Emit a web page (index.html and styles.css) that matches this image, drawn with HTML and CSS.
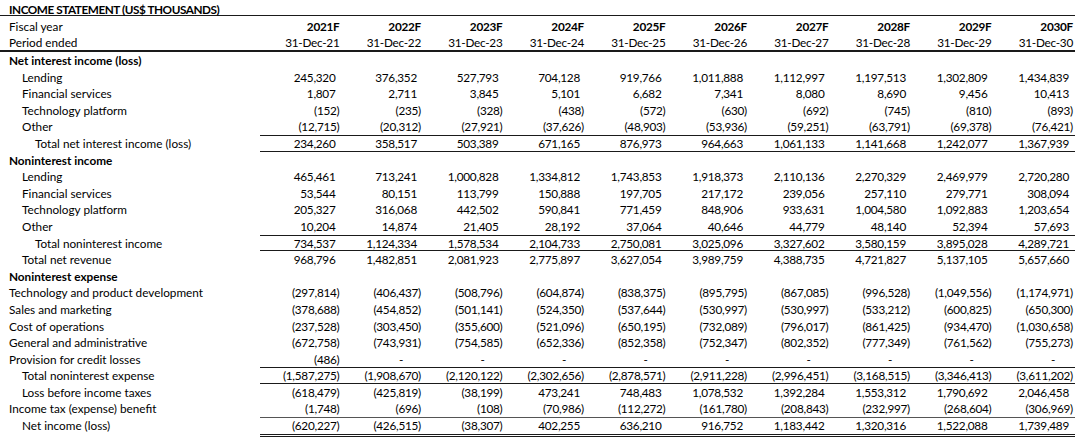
FILE: index.html
```html
<!DOCTYPE html>
<html>
<head>
<meta charset="utf-8">
<link rel="stylesheet" href="styles.css">
</head>
<body>
<div class="sheet">
<div class="row title-row"><div class="lab title">INCOME STATEMENT (US$ THOUSANDS)</div></div>
<div class="row hdr"><div class="lab">Fiscal year</div><div class="n b">2021F</div><div class="n b">2022F</div><div class="n b">2023F</div><div class="n b">2024F</div><div class="n b">2025F</div><div class="n b">2026F</div><div class="n b">2027F</div><div class="n b">2028F</div><div class="n b">2029F</div><div class="n b">2030F</div></div>
<div class="row hdr hdr-end"><div class="lab">Period ended</div><div class="n">31-Dec-21</div><div class="n">31-Dec-22</div><div class="n">31-Dec-23</div><div class="n">31-Dec-24</div><div class="n">31-Dec-25</div><div class="n">31-Dec-26</div><div class="n">31-Dec-27</div><div class="n">31-Dec-28</div><div class="n">31-Dec-29</div><div class="n">31-Dec-30</div></div>
<div class="row"><div class="lab b">Net interest income (loss)</div></div>
<div class="row"><div class="lab l1">Lending</div><div class="n p">245,320</div><div class="n p">376,352</div><div class="n p">527,793</div><div class="n p">704,128</div><div class="n p">919,766</div><div class="n p">1,011,888</div><div class="n p">1,112,997</div><div class="n p">1,197,513</div><div class="n p">1,302,809</div><div class="n p">1,434,839</div></div>
<div class="row"><div class="lab l1">Financial services</div><div class="n p">1,807</div><div class="n p">2,711</div><div class="n p">3,845</div><div class="n p">5,101</div><div class="n p">6,682</div><div class="n p">7,341</div><div class="n p">8,080</div><div class="n p">8,690</div><div class="n p">9,456</div><div class="n p">10,413</div></div>
<div class="row"><div class="lab l1">Technology platform</div><div class="n">(152)</div><div class="n">(235)</div><div class="n">(328)</div><div class="n">(438)</div><div class="n">(572)</div><div class="n">(630)</div><div class="n">(692)</div><div class="n">(745)</div><div class="n">(810)</div><div class="n">(893)</div></div>
<div class="row"><div class="lab l1">Other</div><div class="n">(12,715)</div><div class="n">(20,312)</div><div class="n">(27,921)</div><div class="n">(37,626)</div><div class="n">(48,903)</div><div class="n">(53,936)</div><div class="n">(59,251)</div><div class="n">(63,791)</div><div class="n">(69,378)</div><div class="n">(76,421)</div></div>
<div class="row sub"><div class="lab l2">Total net interest income (loss)</div><div class="n p">234,260</div><div class="n p">358,517</div><div class="n p">503,389</div><div class="n p">671,165</div><div class="n p">876,973</div><div class="n p">964,663</div><div class="n p">1,061,133</div><div class="n p">1,141,668</div><div class="n p">1,242,077</div><div class="n p">1,367,939</div></div>
<div class="row"><div class="lab b">Noninterest income</div></div>
<div class="row"><div class="lab l1">Lending</div><div class="n p">465,461</div><div class="n p">713,241</div><div class="n p">1,000,828</div><div class="n p">1,334,812</div><div class="n p">1,743,853</div><div class="n p">1,918,373</div><div class="n p">2,110,136</div><div class="n p">2,270,329</div><div class="n p">2,469,979</div><div class="n p">2,720,280</div></div>
<div class="row"><div class="lab l1">Financial services</div><div class="n p">53,544</div><div class="n p">80,151</div><div class="n p">113,799</div><div class="n p">150,888</div><div class="n p">197,705</div><div class="n p">217,172</div><div class="n p">239,056</div><div class="n p">257,110</div><div class="n p">279,771</div><div class="n p">308,094</div></div>
<div class="row"><div class="lab l1">Technology platform</div><div class="n p">205,327</div><div class="n p">316,068</div><div class="n p">442,502</div><div class="n p">590,841</div><div class="n p">771,459</div><div class="n p">848,906</div><div class="n p">933,631</div><div class="n p">1,004,580</div><div class="n p">1,092,883</div><div class="n p">1,203,654</div></div>
<div class="row"><div class="lab l1">Other</div><div class="n p">10,204</div><div class="n p">14,874</div><div class="n p">21,405</div><div class="n p">28,192</div><div class="n p">37,064</div><div class="n p">40,646</div><div class="n p">44,779</div><div class="n p">48,140</div><div class="n p">52,394</div><div class="n p">57,693</div></div>
<div class="row sub"><div class="lab l2">Total noninterest income</div><div class="n p">734,537</div><div class="n p">1,124,334</div><div class="n p">1,578,534</div><div class="n p">2,104,733</div><div class="n p">2,750,081</div><div class="n p">3,025,096</div><div class="n p">3,327,602</div><div class="n p">3,580,159</div><div class="n p">3,895,028</div><div class="n p">4,289,721</div></div>
<div class="row"><div class="lab l1">Total net revenue</div><div class="n p">968,796</div><div class="n p">1,482,851</div><div class="n p">2,081,923</div><div class="n p">2,775,897</div><div class="n p">3,627,054</div><div class="n p">3,989,759</div><div class="n p">4,388,735</div><div class="n p">4,721,827</div><div class="n p">5,137,105</div><div class="n p">5,657,660</div></div>
<div class="row"><div class="lab b">Noninterest expense</div></div>
<div class="row"><div class="lab">Technology and product development</div><div class="n">(297,814)</div><div class="n">(406,437)</div><div class="n">(508,796)</div><div class="n">(604,874)</div><div class="n">(838,375)</div><div class="n">(895,795)</div><div class="n">(867,085)</div><div class="n">(996,528)</div><div class="n">(1,049,556)</div><div class="n">(1,174,971)</div></div>
<div class="row"><div class="lab">Sales and marketing</div><div class="n">(378,688)</div><div class="n">(454,852)</div><div class="n">(501,141)</div><div class="n">(524,350)</div><div class="n">(537,644)</div><div class="n">(530,997)</div><div class="n">(530,997)</div><div class="n">(533,212)</div><div class="n">(600,825)</div><div class="n">(650,300)</div></div>
<div class="row"><div class="lab">Cost of operations</div><div class="n">(237,528)</div><div class="n">(303,450)</div><div class="n">(355,600)</div><div class="n">(521,096)</div><div class="n">(650,195)</div><div class="n">(732,089)</div><div class="n">(796,017)</div><div class="n">(861,425)</div><div class="n">(934,470)</div><div class="n">(1,030,658)</div></div>
<div class="row"><div class="lab">General and administrative</div><div class="n">(672,758)</div><div class="n">(743,931)</div><div class="n">(754,585)</div><div class="n">(652,336)</div><div class="n">(852,358)</div><div class="n">(752,347)</div><div class="n">(802,352)</div><div class="n">(777,349)</div><div class="n">(761,562)</div><div class="n">(755,273)</div></div>
<div class="row"><div class="lab">Provision for credit losses</div><div class="n">(486)</div><div class="n z">-</div><div class="n z">-</div><div class="n z">-</div><div class="n z">-</div><div class="n z">-</div><div class="n z">-</div><div class="n z">-</div><div class="n z">-</div><div class="n z">-</div></div>
<div class="row sub"><div class="lab l1">Total noninterest expense</div><div class="n">(1,587,275)</div><div class="n">(1,908,670)</div><div class="n">(2,120,122)</div><div class="n">(2,302,656)</div><div class="n">(2,878,571)</div><div class="n">(2,911,228)</div><div class="n">(2,996,451)</div><div class="n">(3,168,515)</div><div class="n">(3,346,413)</div><div class="n">(3,611,202)</div></div>
<div class="row"><div class="lab l1">Loss before income taxes</div><div class="n">(618,479)</div><div class="n">(425,819)</div><div class="n">(38,199)</div><div class="n p">473,241</div><div class="n p">748,483</div><div class="n p">1,078,532</div><div class="n p">1,392,284</div><div class="n p">1,553,312</div><div class="n p">1,790,692</div><div class="n p">2,046,458</div></div>
<div class="row"><div class="lab">Income tax (expense) benefit</div><div class="n">(1,748)</div><div class="n">(696)</div><div class="n">(108)</div><div class="n">(70,986)</div><div class="n">(112,272)</div><div class="n">(161,780)</div><div class="n">(208,843)</div><div class="n">(232,997)</div><div class="n">(268,604)</div><div class="n">(306,969)</div></div>
<div class="row net"><div class="lab l1">Net income (loss)</div><div class="n">(620,227)</div><div class="n">(426,515)</div><div class="n">(38,307)</div><div class="n p">402,255</div><div class="n p">636,210</div><div class="n p">916,752</div><div class="n p">1,183,442</div><div class="n p">1,320,316</div><div class="n p">1,522,088</div><div class="n p">1,739,489</div></div>
</div>
</body>
</html>
```
FILE: styles.css
```css
html, body {
  margin: 0;
  padding: 0;
  background: #ffffff;
}

body {
  font-family: Lato, "Liberation Sans", sans-serif;
  font-size: 11.75px;
  color: #000000;
}

.sheet {
  display: flex;
  flex-direction: column;
  width: 1075px;
}

.row {
  display: grid;
  grid-template-columns: 260px repeat(10, 81.5px);
  height: 16.6px;
  flex: 0 0 16.6px;
  box-sizing: border-box;
}

.row > div {
  box-sizing: border-box;
  height: 16.6px;
  padding-top: 1px;
  line-height: 16px;
  white-space: nowrap;
}

.lab {
  text-align: left;
  padding-left: 9px;
}

.lab.l1 { padding-left: 22px; }
.lab.l2 { padding-left: 35px; }

.title-row {
  border-bottom: 1px solid #1a1a1a;
  height: 16px;
  flex-basis: 16px;
}

.row > .title {
  grid-column: 1 / -1;
  font-weight: 700;
  letter-spacing: -0.45px;
  height: 15px;
  padding-top: 3px;
  line-height: 14px;
}

.hdr {
  height: 18px;
  flex-basis: 18px;
}

.hdr > div {
  height: 18px;
  padding-top: 4px;
  line-height: 14px;
}

.hdr-end {
  border-bottom: 2px solid #1a1a1a;
}

.hdr-end > div {
  height: 16px;
  padding-top: 2px;
  line-height: 14px;
}

.n {
  text-align: right;
  padding-right: 2px;
  letter-spacing: -0.25px;
}

.b { font-weight: 700; }

.n.p { padding-right: 6px; }
.n.z { padding-right: 20px; }

.sub .n {
  border-top: 1px solid #1a1a1a;
  border-bottom: 1px solid #1a1a1a;
  padding-top: 0;
  line-height: 15px;
}

.net {
  height: 19.6px;
  flex-basis: 19.6px;
}

.net .n {
  height: 19.6px;
  border-top: 1px solid #555555;
  border-bottom: 3px double #1a1a1a;
  padding-top: 0;
  line-height: 16px;
}
```
